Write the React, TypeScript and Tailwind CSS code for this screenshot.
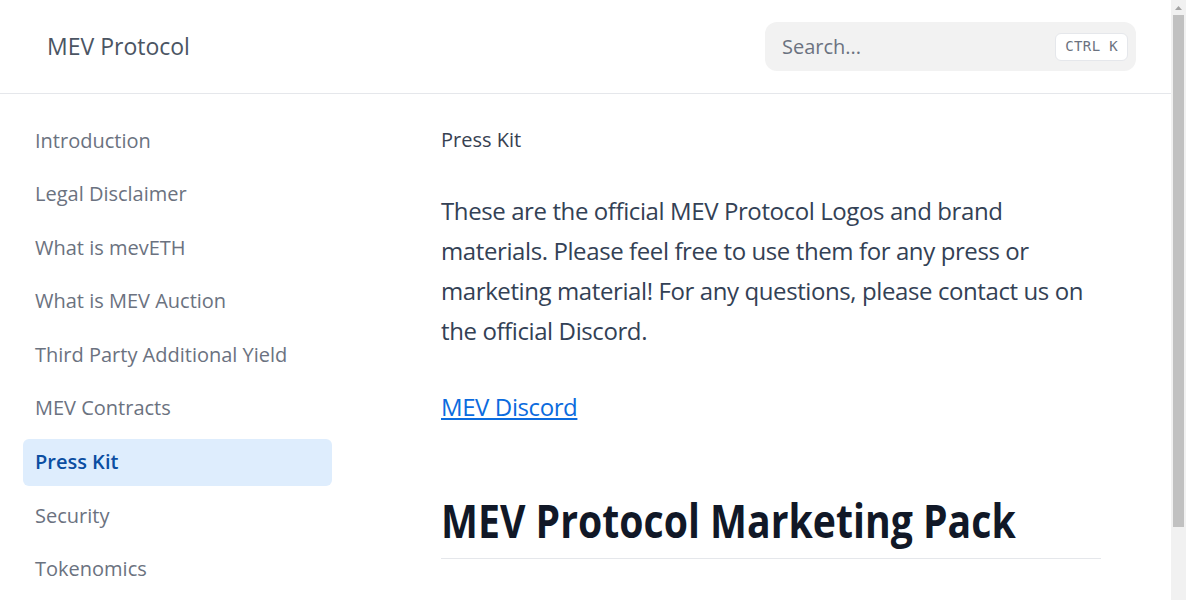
import React from 'react'

const navItems = [
  'Introduction',
  'Legal Disclaimer',
  'What is mevETH',
  'What is MEV Auction',
  'Third Party Additional Yield',
  'MEV Contracts',
  'Press Kit',
  'Security',
  'Tokenomics',
]

// the browser scrollbar seen in the screenshot
function ScrollBar() {
  return (
    <div className="fixed inset-y-0 right-0 flex w-[15px] flex-col items-center bg-[#f1f1f1]">
      <div className="flex h-[15px] w-full items-center justify-center">
        <svg width="7" height="4" viewBox="0 0 7 4">
          <path d="M3.5 0L7 4H0z" fill="#a3a3a3" />
        </svg>
      </div>
      <div className="h-[512px] w-[11px] bg-[#c1c1c1]" />
    </div>
  )
}

export default function App() {
  const active = 'Press Kit'

  return (
    <div className="min-h-[668px] bg-white pr-[15px] font-['Open_Sans',sans-serif]">
      <header className="flex h-[94px] items-center justify-between border-b border-gray-200 pl-[47px] pr-[35px]">
        <span className="text-[23px] text-[#4b5563]">MEV Protocol</span>
        <div className="flex h-[49px] w-[371px] items-center justify-between rounded-xl bg-[#f2f2f2] pl-[17px] pr-[8px]">
          <span className="text-[20px] text-[#6b7280]">Search...</span>
          <kbd className="flex h-[28px] items-center rounded-md border border-gray-200 bg-white px-[9px] font-['DejaVu_Sans_Mono',monospace] text-[14px] tracking-wide text-[#6b7280]">
            CTRL K
          </kbd>
        </div>
      </header>

      <div className="flex">
        <nav className="flex w-[355px] shrink-0 flex-col gap-[6.6px] px-[23px] pt-[23px]">
          {navItems.map((item) => (
            <a
              key={item}
              className={
                item === active
                  ? 'flex h-[47px] items-center rounded-md bg-[#deedfd] px-[12px] text-[20px] font-semibold text-[#0b4ea2]'
                  : 'flex h-[47px] items-center rounded-md px-[12px] text-[20px] text-[#6b7280]'
              }
              href="#"
            >
              {item}
            </a>
          ))}
        </nav>

        <main className="ml-[86px] w-[660px] pt-[32px]">
          <p className="text-[20px] leading-[28px] text-[#374151]">Press Kit</p>
          <p className="mt-[37px] text-[24px] leading-[40px] tracking-[-0.4px] text-[#334155]">
            These are the official MEV Protocol Logos and brand materials. Please feel free to use them
            for any press or marketing material! For any questions, please contact us on the official
            Discord.
          </p>
          <p className="mt-[36px] text-[24px] leading-[40px] tracking-[-0.4px]">
            <a className="text-[#0b6bde] underline" href="#">
              MEV Discord
            </a>
          </p>
          <h1 className="mt-[63px] border-b border-gray-200 pb-[8px] text-[46px] font-bold leading-[60px] text-[#111827]">
            <span className="inline-block origin-left scale-x-[0.852] whitespace-nowrap">
              MEV Protocol Marketing Pack
            </span>
          </h1>
        </main>
      </div>
      <ScrollBar />
    </div>
  )
}
